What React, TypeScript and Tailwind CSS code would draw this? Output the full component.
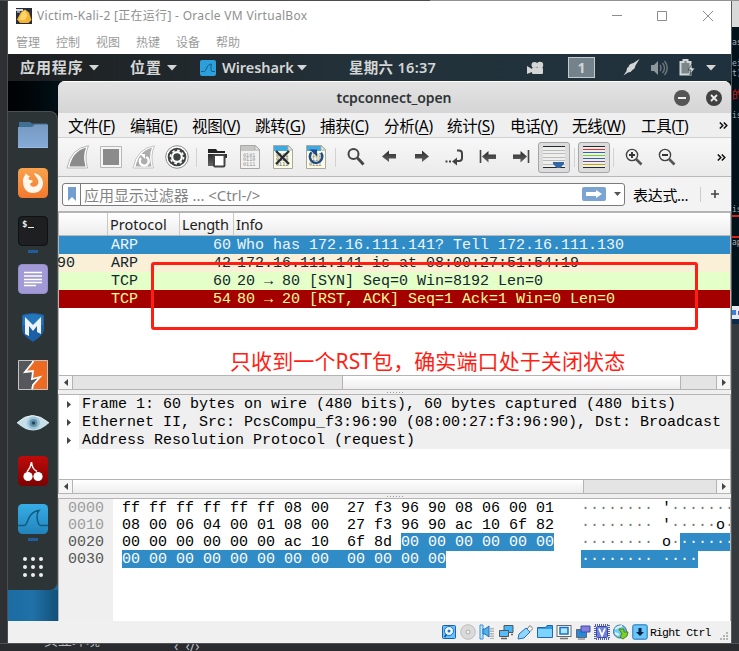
import React from "react";

const ui = "font-['Noto_Sans','Noto_Sans_CJK_SC',sans-serif]";
const mono = "font-['Liberation_Mono','DejaVu_Sans_Mono',monospace]";

function Icon({ children, size = 24 }: { children: React.ReactNode; size?: number }) {
  return (
    <svg width={size} height={size} viewBox={`0 0 ${size} ${size}`} fill="none" className="block shrink-0">
      {children}
    </svg>
  );
}

function Caret() {
  return (
    <svg width="10" height="6" viewBox="0 0 10 6" className="block shrink-0">
      <path d="M0 0h10L5 5.500z" fill="#d4d6d6" />
    </svg>
  );
}

/* ---------- VirtualBox frame ---------- */

function TitleBar() {
  return (
    <div className="flex h-[29px] shrink-0 items-center pl-2">
      <Icon size={16}>
        <rect width="16" height="16" fill="#252c3a" />
        <path d="M5 4L9 1.500l4 3 2.500 7.500-3 3H4l-3-3.500z" fill="#f5b335" />
        <path d="M6 4.500l3-2 2.500 5-3 5-5.500-1z" fill="#ffd567" />
        <path d="M0 1h7v2H0z" fill="#d8d8e0" />
        <path d="M1 3h3v2H1z" fill="#8c93a5" />
      </Icon>
      <span className="ml-[5px] w-[275px] pt-px text-[12px] leading-[16px] tracking-[0.3px] whitespace-nowrap text-[#8f8f8f]">
        Victim-Kali-2 [正在运行] - Oracle VM VirtualBox
      </span>
      <div className="ml-auto flex items-center pr-[18px]">
        <svg width="10" height="11" viewBox="0 0 10 11"><path d="M0 5.500h10" stroke="#8c8c8c" /></svg>
        <svg width="10" height="10" viewBox="0 0 10 10" className="ml-[35px]"><path d="M.5.500h9v9h-9z" fill="none" stroke="#8c8c8c" /></svg>
        <svg width="10" height="10" viewBox="0 0 10 10" className="ml-9"><path d="M0 0l10 10M10 0L0 10" stroke="#8c8c8c" /></svg>
      </div>
    </div>
  );
}

function VmMenu() {
  return (
    <div className="flex h-6 shrink-0 items-center gap-4 pt-[2px] pl-2 text-[12px] text-[#9a9a9a]">
      {["管理", "控制", "视图", "热键", "设备", "帮助"].map((m) => (
        <span key={m} className="w-6 whitespace-nowrap">{m}</span>
      ))}
    </div>
  );
}

function GnomeBar() {
  return (
    <div className="flex h-[27px] shrink-0 items-center bg-linear-to-r from-[#1d1f20] via-[#23323a] to-[#1f313d] text-[14.5px] font-bold text-[#d4d6d6]">
      <span className="ml-3 w-[69px] text-[15px] tracking-[0.9px] whitespace-nowrap">应用程序</span>
      <Caret />
      <span className="ml-[31px] w-[37px] text-[15px] tracking-[0.9px] whitespace-nowrap">位置</span>
      <Caret />
      <svg width="16" height="16" viewBox="0 0 16 16" className="ml-[23px] shrink-0">
        <rect width="16" height="16" rx="2" fill="#2ba0da" />
        <path d="M1 11.500h2.500c4 0 2-7 8-7.500-1 2-.5 7.500.5 7.500h3" fill="none" stroke="#155a82" />
      </svg>
      <span className="ml-[6px] w-[75px] font-semibold tracking-[-0.05px] whitespace-nowrap">Wireshark</span>
      <Caret />
      <span className="ml-[42px] w-[100px] font-semibold tracking-[0.3px] whitespace-nowrap">星期六 16:37</span>
      <svg width="17" height="14" viewBox="0 0 17 14" className="ml-[78px] shrink-0" fill="#d4d6d6">
        <circle cx="7.500" cy="4" r="3" /><circle cx="13" cy="4" r="3.200" />
        <rect x="5" y="6.500" width="11" height="6.500" rx="1" />
        <path d="M0 5l5 3v3l-5 2z" />
      </svg>
      <span className="ml-6 flex h-[21px] w-[27px] shrink-0 items-center justify-center border border-[#c5cacc] bg-[#74828b] text-[14px] leading-none">1</span>
      <svg width="17" height="17" viewBox="0 0 17 17" className="ml-7 shrink-0" fill="#d4d6d6">
        <path d="M16.500 0l-4 6.500-1 3-2 1.500-4-4 2-2 3-1zM.5 16.500l3-4.500.5-3 2-1.500 3.500 3.500-2 2-2.500.5z" />
      </svg>
      <svg width="17" height="16" viewBox="0 0 17 16" className="ml-[11px] shrink-0">
        <path d="M0 5h3l4-4v14l-4-4H0z" fill="#8e979b" />
        <path d="M9 5q2 3 0 6M11.500 3q4 5 0 10M13.500 1q5.500 7 0 14" stroke="#6b777d" strokeWidth="1.400" fill="none" />
      </svg>
      <svg width="17" height="17" viewBox="0 0 17 17" className="ml-[11px] shrink-0">
        <path d="M1.500 3h3V1h4v2h3v12.500h-10z" fill="#7b868b" stroke="#d4d6d6" strokeWidth="2" />
        <path d="M13 5l-4 6h3l-1 5 5-7h-3z" fill="#d4d6d6" stroke="#20313b" strokeWidth=".7" />
      </svg>
      <div className="ml-[10px]"><Caret /></div>
    </div>
  );
}

/* ---------- Dock ---------- */

const dockIcons: { name: string; running?: boolean; art: React.ReactNode }[] = [
  {
    name: "files",
    art: (
      <>
        <path d="M1 2h11l2 1.500h15V8H1z" fill="#3f6f93" />
        <path d="M0 7h14l3-2.500h13V28H0z" fill="url(#folderFill)" />
        <path d="M0 27.500h30" stroke="#9cbde2" />
      </>
    ),
  },
  {
    name: "firefox",
    art: (
      <>
        <rect width="30" height="30" rx="4.500" fill="url(#orangeFill)" />
        <path d="M5 13c0-4 2-5 3-8 1 2 2 3 4 3-2 2-2 4 1 4l2 1c-1 2-3 2-3 3 1 4 7 3 8 0 2-5-3-7-4-11 5 1 9 5 9 10 0 6-4 10-10 10S5 21 5 13z" fill="#fff6ec" />
      </>
    ),
  },
  {
    name: "terminal",
    running: true,
    art: (
      <>
        <rect width="30" height="30" rx="4.500" fill="#1e1f20" />
        <rect x=".5" y=".5" width="29" height="29" rx="4" stroke="#111" />
        <text x="4" y="11" fontSize="9" fontWeight="700" fill="#eee" fontFamily="DejaVu Sans Mono, monospace">$</text>
        <path d="M10 11.500h6" stroke="#eee" />
      </>
    ),
  },
  {
    name: "notes",
    art: (
      <>
        <rect width="30" height="30" rx="4.500" fill="#958dcb" />
        <rect x="1" y="1" width="28" height="28" rx="3.500" fill="#a29ad6" />
        <path d="M6 8.500h18M6 12h18M6 15.500h18M6 18.500h18M6 21.500h12" stroke="#fff" strokeWidth="1.500" />
      </>
    ),
  },
  {
    name: "metasploit",
    art: (
      <>
        <path d="M4 3l3-1 8-1 8 1 3 1v14c0 6-6 9-11 13C10 26 4 23 4 17z" fill="#1d5fa4" />
        <path d="M5 4q10-4 20 0v9H5z" fill="#2a86cf" opacity=".6" />
        <path d="M7 22V5l8 8 8-8v17l-4-2v-6l-4 5-4-5v10z" fill="#eef3f8" />
      </>
    ),
  },
  {
    name: "burp",
    art: (
      <>
        <path d="M0 0h30v30H0z" fill="#54575b" />
        <path d="M15 0h15v30H14l1-5 7-8-8 2 1-8-8 1 8-11z" fill="#ec6a22" />
        <path d="M15 1l0 1-8 10 8-1-1 8 8-2-7 8-1 5" stroke="#fff" strokeWidth="1.800" />
        <path d="M.5.500h29v29H.5z" stroke="#c9c3bd" />
      </>
    ),
  },
  {
    name: "eye",
    art: (
      <>
        <path d="M-1 15q15-15 32 0-16 15-32 0z" fill="#c5dfe9" />
        <path d="M-1 15q15-15 32 0" stroke="#e9f3f7" />
        <circle cx="15.500" cy="15" r="6.500" fill="#9fc6d8" />
        <circle cx="15.500" cy="15" r="4" fill="#6494ae" />
        <circle cx="15.500" cy="15" r="1.800" fill="#2a475c" />
      </>
    ),
  },
  {
    name: "cherry",
    art: (
      <>
        <rect width="30" height="30" rx="4.500" fill="url(#cherryFill)" />
        <path d="M9 16q4-5 4.500-10Q14 13 19 15.500" stroke="#fff" strokeWidth="1.500" />
        <circle cx="10" cy="20.500" r="4.600" fill="#fff" /><circle cx="20" cy="20.500" r="4.600" fill="#fff" />
      </>
    ),
  },
  {
    name: "wireshark",
    running: true,
    art: (
      <>
        <rect width="30" height="30" rx="4.500" fill="url(#sharkFill)" />
        <path d="M0 21.500h6c5 0 2-13 15-15-4 5-1 15 2 15h7" stroke="#145a80" strokeWidth="1.500" />
      </>
    ),
  },
  {
    name: "apps",
    art: (
      <g fill="#eeeeec">
        {[7, 15, 23].map((y) => [7, 15, 23].map((x) => <circle key={`${x}-${y}`} cx={x} cy={y} r="2" />))}
      </g>
    ),
  },
];

function Dock() {
  return (
    <div className="flex w-[50px] shrink-0 flex-col bg-[#1c6a9d]">
      <svg width="0" height="0" className="absolute">
        <defs>
          <linearGradient id="folderFill" x2="0" y2="1"><stop stopColor="#7599c2" /><stop offset="1" stopColor="#86abd8" /></linearGradient>
          <linearGradient id="orangeFill" x2="0" y2="1"><stop stopColor="#f9a24c" /><stop offset="1" stopColor="#f3782e" /></linearGradient>
          <linearGradient id="cherryFill" x2="0" y2="1"><stop stopColor="#c00a0a" /><stop offset="1" stopColor="#7c0202" /></linearGradient>
          <linearGradient id="sharkFill" x2="0" y2="1"><stop stopColor="#37aee6" /><stop offset="1" stopColor="#2183bb" /></linearGradient>
          <linearGradient id="grayFill" x2="0" y2="1"><stop stopColor="#2b2b2b" /><stop offset="1" stopColor="#666" /></linearGradient>
        </defs>
      </svg>
      <div className="h-[30px] bg-linear-to-r from-[#000203] to-[#021016]" />
      <div className="bg-linear-to-b from-[#00060a] from-50% to-[#1c6a9d] to-50%">
        <div className="h-[479px] rounded-r-[8px] border-t border-r border-[#4a5052] bg-[#2d3436]">
          {dockIcons.map((d) => (
            <div key={d.name} className="flex h-12 flex-col items-center pt-2 last:h-[46px]">
              <svg width="30" height="30" viewBox="0 0 30 30" fill="none" className="block shrink-0 overflow-visible">{d.art}</svg>
              {d.running && <div className="mt-[4px] h-[3px] w-[10px] shrink-0 bg-[#215d9c]" />}
            </div>
          ))}
        </div>
      </div>
      <div className="flex-1 bg-linear-to-r from-[#1b6ca3] via-[#2071a8] to-[#125078]" />
    </div>
  );
}

/* ---------- Wireshark ---------- */

const menus: [string, string, string][] = [
  ["文件", "F", "w-[62px]"],
  ["编辑", "E", "w-[62px]"],
  ["视图", "V", "w-[63px]"],
  ["跳转", "G", "w-[65px]"],
  ["捕获", "C", "w-[64px]"],
  ["分析", "A", "w-[63px]"],
  ["统计", "S", "w-[63px]"],
  ["电话", "Y", "w-[62px]"],
  ["无线", "W", "w-[69px]"],
  ["工具", "T", "w-[60px]"],
];

function More() {
  return (
    <svg width="9" height="7" viewBox="0 0 9 7" fill="none" className="block shrink-0">
      <path d="M.8.500l3 3-3 3M4.800.500l3 3-3 3" stroke="#111" strokeWidth="1.500" />
    </svg>
  );
}

function Sep() {
  return <div className="h-[19px] w-px bg-[#d2d2d2]" />;
}

function Cell({ children }: { children: React.ReactNode }) {
  return <div className="flex w-[33px] shrink-0 items-center justify-center">{children}</div>;
}

function Bits({ color }: { color: string }) {
  return (
    <g fill={color} fontSize="5.200" fontWeight="700" fontFamily="DejaVu Sans Mono, monospace">
      <text x="5" y="11.500">0101</text>
      <text x="5" y="16">0110</text>
      <text x="5" y="20.500">0111</text>
    </g>
  );
}

function DocShape({ top, body }: { top: string; body: string }) {
  return (
    <>
      <path d="M2.500.500h15l4 4v19h-19z" fill={body} stroke="#a9a9a2" />
      <path d="M3 1h14v5H3z" fill={top} />
      <path d="M17 .5v4.500h4.500z" fill="#f4f4f4" stroke="#a9a9a2" />
    </>
  );
}

function Toolbar() {
  return (
    <div className="flex h-[39px] shrink-0 items-center border-b border-[#b9b9b9] bg-linear-to-b from-[#f7f7f7] to-[#ebebeb] pl-[3px]">
      <Cell><Icon>
        <path d="M1 23Q5 3 22.500.800 18 10 21.500 23z" fill="#fff" stroke="#b5b5b5" />
        <path d="M3.500 21.500Q7 6 20 2.800 16.500 11 19.500 21.500z" fill="#8b8b8b" />
      </Icon></Cell>
      <Cell><Icon>
        <path d="M1.500 1.500h21v21h-21z" fill="#f6f6f6" stroke="#b8b8b8" />
        <path d="M4 4h16v16H4z" fill="#8b8b8b" />
      </Icon></Cell>
      <Cell><Icon>
        <path d="M1 23Q5 3 22.500.800 18 10 21.500 23z" fill="#fff" stroke="#c4c4c4" />
        <path d="M3.500 21.500Q7 6 20 2.800 16.500 11 19.500 21.500z" fill="#adadad" />
        <path d="M9 13a4.500 4.500 0 1 0 5-1" stroke="#fff" strokeWidth="2.300" />
        <path d="M8 9l5 0v5z" fill="#fff" />
      </Icon></Cell>
      <Cell><Icon>
        <circle cx="12" cy="12" r="11.300" fill="#fff" stroke="#8d8d8d" />
        <circle cx="12" cy="12" r="9.300" fill="#3f4243" />
        <circle cx="12" cy="12" r="4.800" stroke="#fff" strokeWidth="2.200" />
        <circle cx="12" cy="12" r="6.600" stroke="#fff" strokeWidth="1.600" strokeDasharray="2.590 2.590" />
      </Icon></Cell>
      <div className="flex w-[7px] shrink-0 justify-center"><Sep /></div>
      <Cell><Icon>
        <path d="M3 4h8l1.500 2H20v2H3z" fill="#222" />
        <path d="M3 9h19v4H9v8H3z" fill="url(#grayFill)" />
        <rect x="9" y="10" width="10.500" height="11.500" rx="1" fill="#fff" stroke="#444" strokeWidth="2" />
      </Icon></Cell>
      <Cell><Icon><DocShape top="#c6c6c6" body="#f2f2f2" /><Bits color="#aaa" /></Icon></Cell>
      <Cell><Icon><DocShape top="#3fa9e0" body="#fcfbe4" /><Bits color="#88887c" /><path d="M5 6l13 13M18 6L5 19" stroke="#262c33" strokeWidth="2.300" /></Icon></Cell>
      <Cell><Icon><DocShape top="#3fa9e0" body="#fcfbe4" /><Bits color="#99998c" /><path d="M7.500 7.200a6.300 6.300 0 1 0 9.500.5" stroke="#1f4a87" strokeWidth="2.300" /><path d="M5.500 4.500h7.500v7z" fill="#1f4a87" /></Icon></Cell>
      <div className="flex w-[7px] shrink-0 justify-center"><Sep /></div>
      <Cell><Icon><circle cx="9.500" cy="9" r="5" stroke="#444" strokeWidth="2" /><path d="M13.500 13l6 6.500" stroke="#444" strokeWidth="2.800" /></Icon></Cell>
      <Cell><Icon><path d="M5 11.500L12 5.500v3.500h7v4.500h-7v3.500z" fill="url(#grayFill)" /></Icon></Cell>
      <Cell><Icon><path d="M19 11.500L12 5.500v3.500H5v4.500h7v3.500z" fill="url(#grayFill)" /></Icon></Cell>
      <Cell><Icon><path d="M14 5.500h2q3 0 3 3v4.500q0 3-3 3h-3" stroke="#444" strokeWidth="2" /><path d="M9 16.500l5-4v8z" fill="#444" /><path d="M2.500 15.500h2v2h-2zM6 15.500h2v2H6z" fill="#444" /></Icon></Cell>
      <Cell><Icon><path d="M4.500 5v13" stroke="#444" strokeWidth="1.600" /><path d="M6 11.500L12.500 6v3.500H20v4.500h-7.500v3.500z" fill="url(#grayFill)" /></Icon></Cell>
      <Cell><Icon><path d="M19.500 5v13" stroke="#444" strokeWidth="1.600" /><path d="M18 11.500L11.500 6v3.500H4v4.500h7.500v3.500z" fill="url(#grayFill)" /></Icon></Cell>
      <div className="ml-px flex h-[31px] w-8 shrink-0 items-center justify-center rounded-[3px] border border-[#a5a5a5] bg-[#dcdcdc]">
        <Icon>
          <path d="M1 2h22v20H1z" fill="#eee" />
          <path d="M1 1.500h22M1 22.500h22" stroke="#222b2c" />
          <path d="M1 5.500h22M1 8.500h22M1 12.500h22M1 15.500h22M1 19.500h22" stroke="#babdb6" />
          <path d="M11 17h11v2l-4 4h-3l-4-4z" fill="#3465a4" />
        </Icon>
      </div>
      <div className="flex w-2 shrink-0 justify-center"><Sep /></div>
      <div className="flex h-[31px] w-8 shrink-0 items-center justify-center rounded-[3px] border border-[#a5a5a5] bg-[#dcdcdc]">
        <Icon>
          <path d="M1 2h22v20H1z" fill="#eee" />
          <path d="M1 1.500h22M1 22.500h22" stroke="#222b2c" />
          <path d="M1 4.500h22" stroke="#ef2929" /><path d="M1 7.500h22" stroke="#3465a4" />
          <path d="M1 10.500h22" stroke="#73d216" /><path d="M1 13.500h22" stroke="#3465a4" />
          <path d="M1 16.500h22" stroke="#75507b" /><path d="M1 19.500h22" stroke="#c4a000" />
        </Icon>
      </div>
      <div className="flex w-[7px] shrink-0 justify-center"><Sep /></div>
      {[true, false].map((plus) => (
        <Cell key={String(plus)}><Icon>
          <circle cx="10" cy="10" r="5.600" stroke="#444" strokeWidth="1.400" />
          <path d={plus ? "M7 10h6M10 7v6" : "M7 10h6"} stroke="#333" strokeWidth="1.900" />
          <path d="M14 14l5.500 5.500" stroke="#555" strokeWidth="2.600" />
        </Icon></Cell>
      ))}
      <div className="ml-auto pr-[5px]"><More /></div>
    </div>
  );
}

function FilterBar() {
  return (
    <div className="flex h-[34px] shrink-0 items-center bg-[#f3f3f3] pl-1">
      <div className="flex h-[23px] w-[563px] shrink-0 items-center rounded-[3px] border border-[#7b7b7b] bg-white">
        <div className="flex h-full w-[18px] shrink-0 items-center justify-center border-r border-[#7b7b7b]">
          <svg width="8" height="14" viewBox="0 0 8 14"><path d="M0 0h8v14l-4-4-4 4z" fill="#729fcf" /></svg>
        </div>
        <span className="ml-[3px] pt-[2px] text-[15px] leading-none tracking-[-0.05px] whitespace-nowrap text-[#838383]">应用显示过滤器 ... &lt;Ctrl-/&gt;</span>
        <svg width="24" height="14" viewBox="0 0 24 14" className="ml-auto shrink-0">
          <rect width="24" height="14" rx="2" fill="#7ba4d2" />
          <path d="M4 5h10V3l6 4-6 4V9H4z" fill="#fff" />
        </svg>
        <svg width="7" height="4" viewBox="0 0 7 4" className="mr-[3px] ml-[8px] shrink-0"><path d="M0 0h7L3.500 4z" fill="#555" /></svg>
      </div>
      <span className="ml-[8px] w-[60px] pt-[2px] text-[15px] leading-none tracking-[-0.3px] whitespace-nowrap text-black">表达式...</span>
      <div className="ml-[7px] h-[15px] w-px bg-[#ccc]" />
      <svg width="8" height="8" viewBox="0 0 8 8" className="ml-[10px]"><path d="M0 4h8M4 0v8" stroke="#444" strokeWidth="1.600" /></svg>
    </div>
  );
}

const packets = [
  { left: "", proto: "ARP", len: 60, info: "Who has 172.16.111.141? Tell 172.16.111.130", cls: "bg-[#308cc6] text-[#eef6fb]" },
  { left: "90", proto: "ARP", len: 42, info: "172.16.111.141 is at 08:00:27:51:54:19", cls: "bg-[#faf0d7] text-[#12272e]" },
  { left: "", proto: "TCP", len: 60, info: "20 → 80 [SYN] Seq=0 Win=8192 Len=0", cls: "bg-[#e4ffc7] text-[#12272e]" },
  { left: "", proto: "TCP", len: 54, info: "80 → 20 [RST, ACK] Seq=1 Ack=1 Win=0 Len=0", cls: "bg-[#a40000] text-[#fffc9c]" },
];

function ScrollBar({ thumb }: { thumb: React.ReactNode }) {
  return (
    <div className="flex h-[15px] shrink-0 border border-[#b4b4b4] bg-[#e4e4e4]">
      <div className="flex w-[14px] shrink-0 items-center justify-center border-r border-[#b4b4b4] bg-[#f6f6f6]">
        <svg width="4" height="7" viewBox="0 0 4 7"><path d="M4 0v7L0 3.500z" fill="#444" /></svg>
      </div>
      {thumb}
      <div className="ml-auto flex w-[14px] shrink-0 items-center justify-center border-l border-[#b4b4b4] bg-[#f6f6f6]">
        <svg width="4" height="7" viewBox="0 0 4 7"><path d="M0 0v7l4-3.500z" fill="#444" /></svg>
      </div>
    </div>
  );
}

function Splitter() {
  return (
    <div className="flex h-[5px] shrink-0 items-center justify-center gap-[2px] border-b border-[#b4b4b4] bg-[#efefef]">
      {[0, 1, 2, 3, 4, 5].map((i) => <div key={i} className="size-px bg-[#9a9a9a]" />)}
    </div>
  );
}

function PacketList() {
  return (
    <div className="flex h-[164px] shrink-0 flex-col border-x border-t-2 border-[#b4b4b4] bg-white">
      <div className="flex h-[23px] shrink-0 items-center border-b border-[#b9b9b9] bg-linear-to-b from-white to-[#ededed] text-[14.5px] text-[#1c1c1c]">
        <div className="h-full w-[49px] shrink-0 border-r border-[#c8c8c8]" />
        <div className="flex h-full w-[72px] shrink-0 items-center border-r border-[#c8c8c8] pt-px pl-[2px]">Protocol</div>
        <div className="flex h-full w-[54px] shrink-0 items-center border-r border-[#c8c8c8] pt-px pl-[2px] tracking-[-0.2px]">Length</div>
        <div className="pt-px pl-[2px] tracking-[-0.2px]">Info</div>
      </div>
      {packets.map((p) => (
        <div key={p.info} className={`${mono} ${p.cls} flex h-[18px] shrink-0 items-start pt-px text-[15px] leading-[18px] whitespace-pre`}>
          <span className="w-[52px] shrink-0 -indent-[2px]">{p.left}</span>
          <span className="w-[72px] shrink-0">{p.proto}</span>
          <span className="w-[48px] shrink-0 text-right">{p.len}</span>
          <span className="ml-[6px]">{p.info}</span>
        </div>
      ))}
    </div>
  );
}

const tree = [
  "Frame 1: 60 bytes on wire (480 bits), 60 bytes captured (480 bits)",
  "Ethernet II, Src: PcsCompu_f3:96:90 (08:00:27:f3:96:90), Dst: Broadcast",
  "Address Resolution Protocol (request)",
];

const dots = "········";

function HexDump() {
  const hl = "inline-block h-[18px] bg-[#308cc6] text-white";
  return (
    <div className={`${mono} flex h-[122px] shrink-0 border-x border-[#b4b4b4] bg-white text-[15px] leading-[19px] whitespace-pre text-black`}>
      <div className="w-[54px] shrink-0 bg-[#efefef] pl-[9px] text-[#555]">
        <div className="h-[17px] text-[#9c9c9c]">0000</div>
        <div className="h-[17px] text-[#9c9c9c]">0010</div>
        <div className="h-[17px]">0020</div>
        <div className="h-[17px]">0030</div>
      </div>
      <div className="w-[468px] shrink-0 pl-[9px]">
        <div className="h-[17px]">ff ff ff ff ff ff 08 00  27 f3 96 90 08 06 00 01</div>
        <div className="h-[17px]">08 00 06 04 00 01 08 00  27 f3 96 90 ac 10 6f 82</div>
        <div className="h-[17px]">00 00 00 00 00 00 ac 10  6f 8d <span className={hl}>00 00 00 00 00 00</span></div>
        <div className="h-[17px]"><span className={hl}>00 00 00 00 00 00 00 00  00 00 00 00</span></div>
      </div>
      <div className="w-[149px] shrink-0 overflow-hidden text-[#777]">
        <div className="h-[17px]">{dots} <span className="text-black">'</span>·······</div>
        <div className="h-[17px]">{dots} <span className="text-black">'</span>·····<span className="text-black">o</span>·</div>
        <div className="h-[17px]">{dots} <span className="text-black">o</span>·<span className={hl}>······</span></div>
        <div className="h-[17px]"><span className={hl}>{dots} ····</span></div>
      </div>
    </div>
  );
}

function Wireshark() {
  return (
    <div className="flex w-[673px] shrink-0 flex-col overflow-hidden rounded-t-[7px] bg-[#efefef]">
      <div className="flex h-8 shrink-0 items-center border-t border-white bg-linear-to-b from-[#e3e3e3] to-[#d5d5d5]">
        <span className="w-[613px] shrink-0 pl-[59px] text-center text-[14px] font-semibold tracking-[-0.1px] whitespace-nowrap text-[#2e3436]">tcpconnect_open</span>
        <svg width="50" height="16" viewBox="0 0 50 16" className="ml-[3px] shrink-0">
          <circle cx="8" cy="8" r="8" fill="#555" /><path d="M4 8h8" stroke="#eee" strokeWidth="2" />
          <circle cx="40" cy="8" r="8" fill="#414141" /><path d="M37 5l6 6M43 5l-6 6" stroke="#eee" strokeWidth="1.800" />
        </svg>
      </div>
      <div className="flex h-[25px] shrink-0 items-center border-b border-[#d0d0d0] pl-[10px] text-[15.5px] text-black">
        {menus.map(([label, key, width]) => (
          <span key={key} className={`${width} shrink-0 pt-[3px] leading-none tracking-[-0.3px] whitespace-nowrap`}>
            {label}(<span className="underline underline-offset-2">{key}</span>)
          </span>
        ))}
        <div className="ml-auto pr-[3px]"><More /></div>
      </div>
      <Toolbar />
      <FilterBar />
      <PacketList />
      <ScrollBar thumb={
        <>
          <div className="w-[270px] shrink-0 border-r border-[#b4b4b4]" />
          <div className="w-[338px] shrink-0 border-r border-[#b4b4b4] bg-linear-to-b from-white to-[#ededed]" />
        </>
      } />
      <Splitter />
      <div className={`${mono} flex h-[84px] shrink-0 flex-col border-x border-[#b4b4b4] bg-white text-[15px] leading-[18px] whitespace-pre text-black`}>
        {tree.map((t) => (
          <div key={t} className="flex h-[18px] shrink-0 items-center">
            <div className="flex w-5 shrink-0 justify-center">
              <svg width="4" height="7" viewBox="0 0 4 7"><path d="M0 0v7l4-3.500z" fill="#444" /></svg>
            </div>
            <div className="h-[18px] flex-1 bg-[#efefef] pt-px pl-[3px]">{t}</div>
          </div>
        ))}
      </div>
      <ScrollBar thumb={<div className="w-[511px] shrink-0 border-r border-[#b4b4b4] bg-linear-to-b from-white to-[#ededed]" />} />
      <Splitter />
      <HexDump />
    </div>
  );
}

/* ---------- Status bar ---------- */

const deviceIcons: React.ReactNode[] = [
  <><rect x="1.500" y="1.500" width="13" height="13" rx="1" fill="#64c3fa" stroke="#1f5fb0" /><circle cx="8" cy="7" r="4.500" fill="#e9f8ff" stroke="#276fb8" /><circle cx="8" cy="7" r="1.500" fill="#2a72b8" /><path d="M3.500 13l2-2.500" stroke="#1b4c8b" strokeWidth="1.600" /></>,
  <><circle cx="8" cy="8" r="7.300" fill="#dadada" stroke="#bcbcbc" /><circle cx="8" cy="8" r="2" fill="#f4f4f4" stroke="#aaa" /></>,
  <><path d="M1 1h3v14H1z" fill="#bdeaff" stroke="#3d8fd0" /><path d="M4 5h2l4-3v11l-4-3H4z" fill="#4bb3f1" stroke="#2b6cb0" /><path d="M12 4v11M14 4v11" stroke="#a1a1a1" strokeWidth="1.500" strokeDasharray="1.500 1" /></>,
  <><path d="M6 1.500h9v7H6z" fill="#48b5f6" stroke="#555" /><path d="M1.500 6.500h9v6h-9z" fill="#55bdfa" stroke="#555" /><path d="M3 14.500h6M13 10.500h2" stroke="#666" strokeWidth="1.500" /></>,
  <><path d="M10 5l3-3.500 3 3L12.500 8z" fill="#f1f1f1" stroke="#777" /><path d="M1 15l1-5 7-6 4 4-6 6z" fill="#8ed6fb" stroke="#2e73b8" /></>,
  <><path d="M.5 3.500h8l1.500-2h5.500v12H.5z" fill="#2c9ce6" stroke="#2067ab" /><path d="M1 5h14v8H1z" fill="#7cd3fd" /></>,
  <><rect x="1" y="1.500" width="14" height="11" fill="#fff" stroke="#666" /><rect x="4" y="3.500" width="8" height="6.500" fill="#aee6ff" stroke="#1670ca" strokeWidth="1.500" /><path d="M4 14.500h8" stroke="#777" strokeWidth="1.500" /></>,
  <><path d="M1.500 5.500h10v8h-10z" fill="#2489dc" stroke="#666" /><path d="M6 2h9v6H6z" fill="#817ee0" stroke="#3b4a9e" /><path d="M3 15h7" stroke="#666" /></>,
  <><rect x="1" y="1" width="14" height="14" stroke="#5260aa" strokeWidth="2" strokeDasharray="1 1" /><rect x="2.500" y="2.500" width="11" height="11" rx="1" fill="#6e82dc" stroke="#3949a4" /><path d="M5 4.500l3 7 3-7" stroke="#fff" strokeWidth="1.800" /></>,
  <><circle cx="7" cy="7.500" r="6.500" fill="#71c9f6" stroke="#386a8c" /><path d="M2 5q4-3 7-3M2 9l4 2" stroke="#ddf5ff" strokeWidth="2" /><path d="M6 5l5 0 0 3 4 0-1 4-4 3-3-2 2-3z" fill="#80d02b" stroke="#43851b" /></>,
  <><rect x=".8" y=".8" width="14.400" height="14.400" rx="1.500" fill="#69c6f8" stroke="#2271b9" /><path d="M6.500 4h3v4h2.500L8 12 4 8h2.500z" fill="#0b2448" /></>,
];

function StatusBar() {
  return (
    <div className="flex h-[22px] shrink-0 items-center justify-end bg-[#f0f0f0] pr-[3px]">
      <div className="flex items-center gap-[3.100px]">
        {deviceIcons.map((art, i) => (
          <svg key={i} width="16" height="16" viewBox="0 0 16 16" fill="none" className="block shrink-0">{art}</svg>
        ))}
      </div>
      <span className="ml-[2px] w-[70px] pt-px font-['Liberation_Mono',monospace] text-[11.500px] leading-none tracking-[-0.85px] whitespace-pre text-black">Right Ctrl</span>
      <svg width="8" height="8" viewBox="0 0 8 8" className="mt-2 shrink-0" fill="#b5b5b5">
        <path d="M6 0h2v2H6zM3 3h2v2H3zM6 3h2v2H6zM0 6h2v2H0zM3 6h2v2H3zM6 6h2v2H6z" />
      </svg>
    </div>
  );
}

/* ---------- Desktop behind the window ---------- */

function RightSliver() {
  return (
    <div className="flex w-2 shrink-0 flex-col overflow-hidden border-l border-[#555a5c] bg-[#353a3e] font-['DejaVu_Sans_Mono',monospace] text-[8px] leading-[10px] whitespace-pre text-[#a9b0b3]">
      <div className="h-[26px] shrink-0 bg-[#d9d9d9]" />
      <div className="flex h-[279px] shrink-0 flex-col bg-[#02121b]">
        <span className="mt-[11px]">as</span>
        <span className="mt-[11px]">ei</span>
        <span>t)</span>
        <span className="mt-[8px] h-[14px] font-['Noto_Sans_CJK_SC',sans-serif] text-[11px] leading-[14px] text-[#d01912]">的</span>
        <span className="mt-[10px]">is</span>
        <span className="mt-[84px]">is</span>
        <div className="h-[2px] shrink-0 bg-[#d9231b]" />
        <div className="mt-[19px] h-[2px] shrink-0 bg-[#d9231b]" />
        <span>ap</span>
      </div>
      <div className="flex h-[13px] shrink-0 items-center bg-[#e8eaf2]"><div className="size-[5px] bg-[#3c7fd0]" /><div className="ml-[2px] h-1 w-px bg-[#5a55c0]" /></div>
      <div className="h-[5px] shrink-0 bg-[#0b2a4c]" />
    </div>
  );
}

export default function App() {
  return (
    <div className={`${ui} relative flex h-[651px] w-[739px] flex-col overflow-hidden bg-[#2e3034]`}>
      <div className="flex h-px shrink-0"><div className="w-[430px] bg-[#4c4d52]" /><div className="flex-1 bg-[#929292]" /></div>
      <div className="flex h-[642px] shrink-0">
        <div className="w-2 shrink-0 border-r border-[#4b4d50] bg-[#2e3034]" />
        <div className="flex w-[723px] shrink-0 flex-col bg-white">
          <TitleBar />
          <VmMenu />
          <GnomeBar />
          <div className="flex h-[540px] shrink-0 bg-[#051017]">
            <Dock />
            <Wireshark />
          </div>
          <StatusBar />
        </div>
        <RightSliver />
      </div>
      <div className="flex h-2 shrink-0 overflow-hidden border-t border-[#505255] bg-[#292b2f] text-[14px] leading-[14px] text-[#b9bcc2]">
        <span className="-mt-[11px] ml-[44px] w-[130px] whitespace-nowrap">页豆环境</span>
        <span className="-mt-[5px] whitespace-pre">‹  ‹/›</span>
      </div>

      <div className="absolute top-[262px] left-[151px] h-[68px] w-[547px] rounded-[3px] border-[3px] border-[#ff1e14]" />
      <div className="absolute top-[346px] left-[230px] text-[21px] leading-[30px] tracking-[0.1px] whitespace-nowrap text-[#ff1e14]">只收到一个RST包，确实端口处于关闭状态</div>
    </div>
  );
}
